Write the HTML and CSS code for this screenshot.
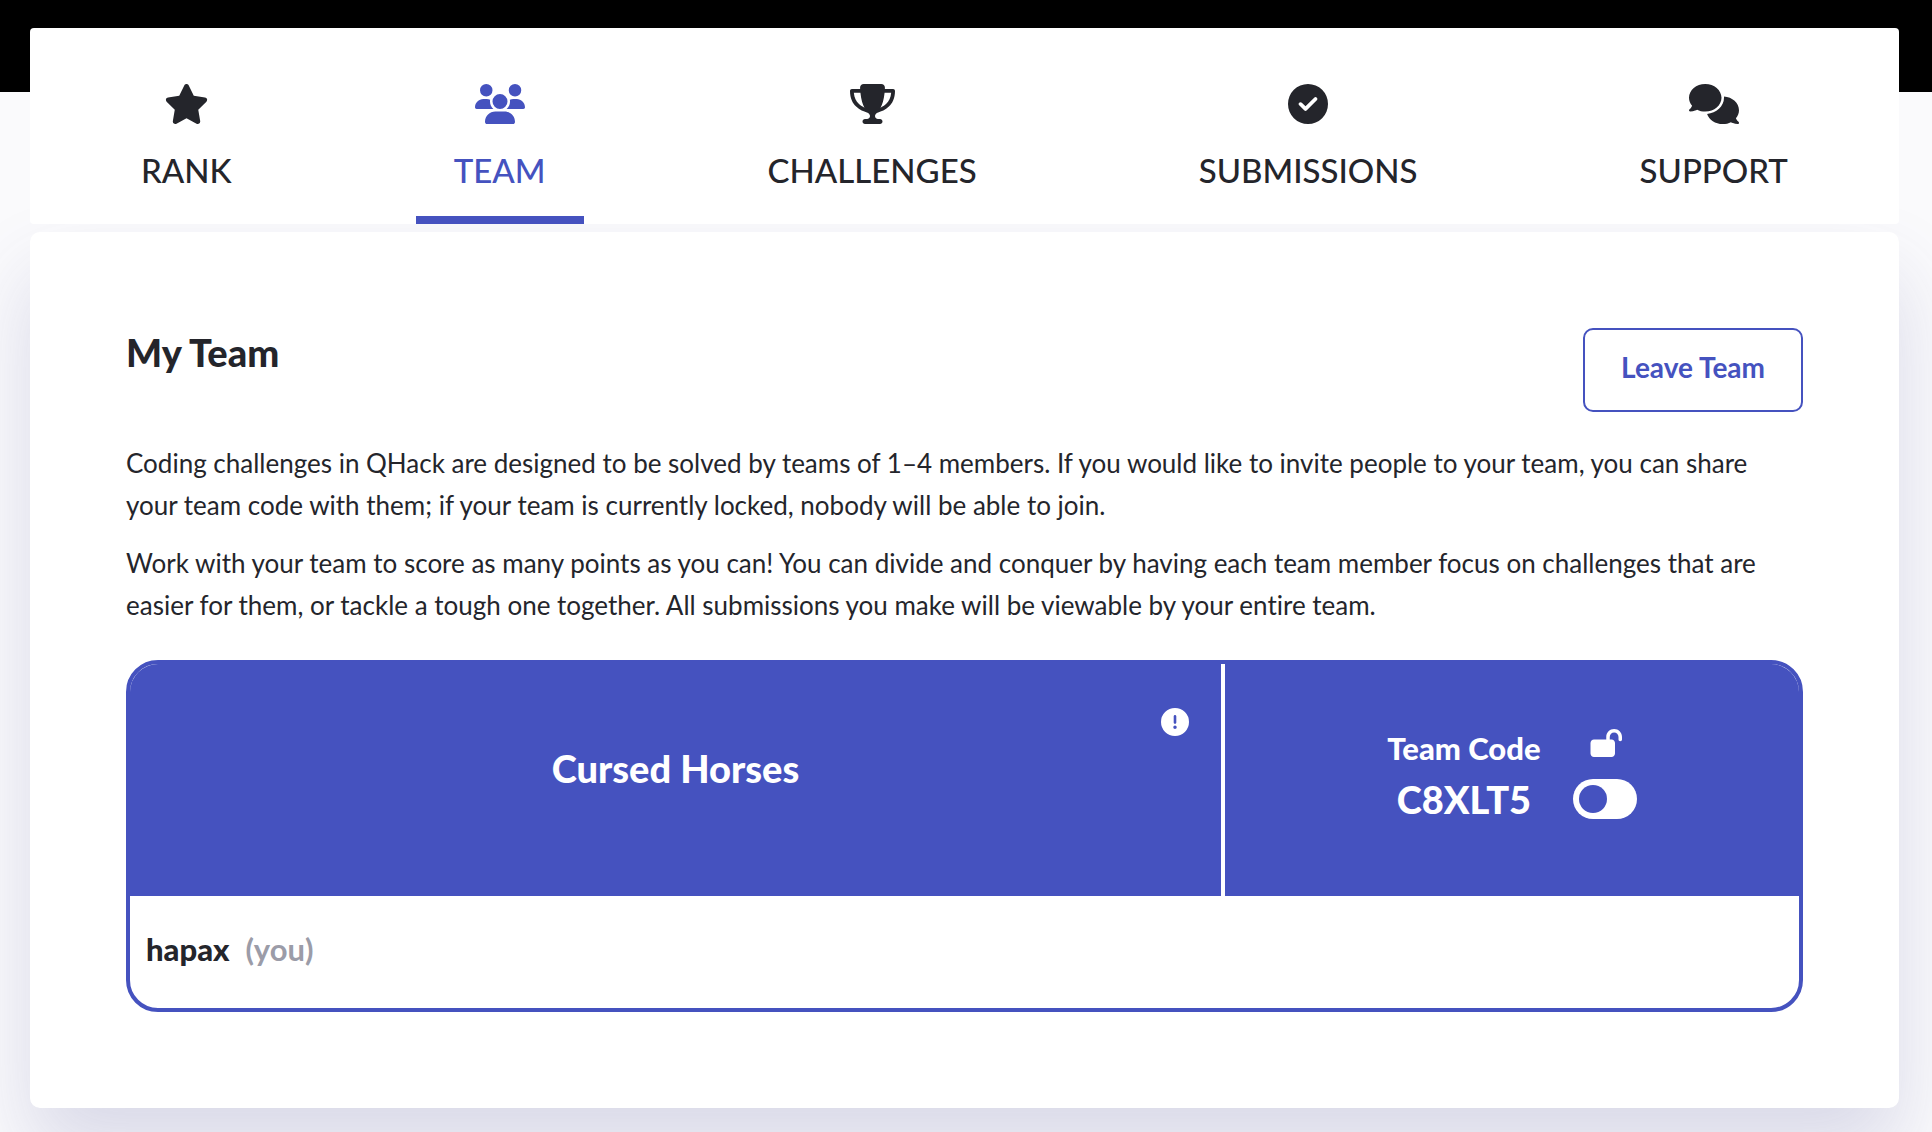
FILE: index.html
```
<!DOCTYPE html>
<html lang="en">
<head>
<meta charset="utf-8">
<meta name="viewport" content="width=device-width, initial-scale=1">
<title>QHack – My Team</title>
<link rel="stylesheet" href="styles.css">
</head>
<body>
<div class="page">
  <nav class="tabs" aria-label="Dashboard">
    <a class="tab" href="#rank">
      <svg class="tab-icon" viewBox="0 0 576 512" aria-hidden="true"><path d="M316.9 18C311.6 7 300.4 0 288.1 0s-23.4 7-28.8 18L195 150.3 51.4 171.5c-12 1.8-22 10.2-25.7 21.7s-.7 24.2 7.9 32.7L137.8 329 113.2 474.7c-2 12 3 24.2 12.9 31.3s23 8 33.8 2.3l128.3-68.5 128.3 68.5c10.8 5.7 23.9 4.9 33.8-2.3s14.9-19.3 12.9-31.3L438.5 329 542.7 225.9c8.6-8.5 11.7-21.2 7.9-32.7s-13.7-19.9-25.7-21.7L381.2 150.3 316.9 18z"/></svg>
      <span>RANK</span>
    </a>
    <a class="tab tab-active" href="#team" aria-current="page">
      <svg class="tab-icon" viewBox="0 0 640 512" aria-hidden="true"><path d="M144 0a80 80 0 1 1 0 160A80 80 0 1 1 144 0zM512 0a80 80 0 1 1 0 160A80 80 0 1 1 512 0zM0 298.7C0 239.8 47.8 192 106.7 192h42.7c15.9 0 31 3.5 44.6 9.7c-1.3 7.2-1.9 14.7-1.9 22.3c0 38.2 16.8 72.5 43.3 96c-.2 0-.4 0-.7 0H21.3C9.6 320 0 310.4 0 298.7zM405.3 320c-.2 0-.4 0-.7 0c26.6-23.5 43.3-57.8 43.3-96c0-7.6-.7-15-1.9-22.3c13.6-6.3 28.7-9.7 44.6-9.7h42.7C592.2 192 640 239.8 640 298.7c0 11.8-9.6 21.3-21.3 21.3H405.3zM224 224a96 96 0 1 1 192 0 96 96 0 1 1 -192 0zM128 485.3C128 411.7 187.7 352 261.3 352H378.7C452.3 352 512 411.7 512 485.3c0 14.7-11.9 26.7-26.7 26.7H154.7c-14.7 0-26.7-11.9-26.7-26.7z"/></svg>
      <span>TEAM</span>
    </a>
    <a class="tab" href="#challenges">
      <svg class="tab-icon" viewBox="0 0 576 512" aria-hidden="true"><path d="M400 0H176c-26.5 0-48.1 21.8-47.1 48.2c.2 5.3 .4 10.6 .7 15.8H24C10.7 64 0 74.7 0 88c0 92.6 33.5 157 78.5 200.7c44.3 43.1 98.3 64.8 138.1 75.8c23.4 6.5 39.4 26 39.4 45.6c0 20.9-17 37.9-37.9 37.9H192c-17.7 0-32 14.3-32 32s14.3 32 32 32H384c17.7 0 32-14.3 32-32s-14.3-32-32-32H357.9C337 448 320 431 320 410.1c0-19.6 15.9-39.2 39.4-45.6c39.9-11 93.9-32.7 138.2-75.8C542.5 245 576 180.6 576 88c0-13.3-10.7-24-24-24H446.4c.3-5.2 .5-10.4 .7-15.8C448.1 21.8 426.5 0 400 0zM48.9 112h84.4c9.1 90.1 29.2 150.3 51.9 190.6c-24.9-11-50.8-26.5-73.2-48.3c-32-31.1-58-76-63-142.3zM464.1 254.3c-22.4 21.8-48.3 37.3-73.2 48.3c22.7-40.3 42.8-100.5 51.9-190.6h84.4c-5.1 66.3-31.1 111.2-63 142.3z"/></svg>
      <span>CHALLENGES</span>
    </a>
    <a class="tab" href="#submissions">
      <svg class="tab-icon" viewBox="0 0 512 512" aria-hidden="true"><path d="M256 512A256 256 0 1 0 256 0a256 256 0 1 0 0 512zM369 209L241 337c-9.4 9.4-24.6 9.4-33.9 0l-64-64c-9.4-9.4-9.4-24.6 0-33.9s24.6-9.4 33.9 0l47 47L335 175c9.4-9.4 24.6-9.4 33.9 0s9.4 24.6 0 33.9z"/></svg>
      <span>SUBMISSIONS</span>
    </a>
    <a class="tab" href="#support">
      <svg class="tab-icon" viewBox="0 0 640 512" aria-hidden="true"><path d="M208 352c114.9 0 208-78.8 208-176S322.9 0 208 0S0 78.8 0 176c0 38.6 14.7 74.3 39.6 103.4c-3.5 9.4-8.7 17.7-14.2 24.7c-4.8 6.2-9.7 11-13.3 14.3c-1.8 1.6-3.3 2.9-4.3 3.7c-.5 .4-.9 .7-1.1 .8l-.2 .2C1 327.2-1.4 334.4 .8 340.9S9.1 352 16 352c21.8 0 43.8-5.6 62.1-12.5c9.2-3.5 17.8-7.4 25.2-11.4C134.1 343.3 169.8 352 208 352zM448 176c0 112.3-99.1 196.9-216.5 207C255.8 457.4 336.4 512 432 512c38.2 0 73.9-8.7 104.7-23.9c7.5 4 16 7.9 25.2 11.4c18.3 6.9 40.3 12.5 62.1 12.5c6.9 0 13.1-4.5 15.2-11.1c2.1-6.6-.2-13.8-5.8-17.9l-.2-.2c-.2-.2-.6-.4-1.1-.8c-1-.8-2.5-2-4.3-3.7c-3.6-3.3-8.5-8.1-13.3-14.3c-5.5-7-10.7-15.4-14.2-24.7c24.9-29 39.6-64.7 39.6-103.4c0-92.8-84.9-168.9-192.6-175.5c.4 5.1 .6 10.3 .6 15.5z"/></svg>
      <span>SUPPORT</span>
    </a>
  </nav>

  <main class="panel">
    <header class="panel-header">
      <h1 class="panel-title">My Team</h1>
      <button class="leave-button" type="button">Leave Team</button>
    </header>

    <div class="intro">
      <p>Coding challenges in QHack are designed to be solved by teams of 1–4 members. If you would like to invite people to your team, you can share your team code with them; if your team is currently locked, nobody will be able to join.</p>
      <p>Work with your team to score as many points as you can! You can divide and conquer by having each team member focus on challenges that are easier for them, or tackle a tough one together. All submissions you make will be viewable by your entire team.</p>
    </div>

    <table class="team">
      <thead>
        <tr>
          <th class="team-name" scope="col">
            Cursed Horses
            <svg class="notice" viewBox="0 0 512 512" role="img" aria-label="Team notice"><path d="M256 512A256 256 0 1 0 256 0a256 256 0 1 0 0 512zm0-384c13.3 0 24 10.7 24 24V264c0 13.3-10.7 24-24 24s-24-10.7-24-24V152c0-13.3 10.7-24 24-24zM224 352a32 32 0 1 1 64 0 32 32 0 1 1 -64 0z"/></svg>
          </th>
          <th class="team-access" scope="col">
            <div class="access">
              <div class="code">
                <span class="code-label">Team Code</span>
                <span class="code-value">C8XLT5</span>
              </div>
              <label class="lock">
                <svg class="lock-icon" viewBox="-64 0 640 512" role="img" aria-label="Lock team"><path d="M352 144c0-44.2 35.8-80 80-80s80 35.8 80 80v48c0 17.7 14.3 32 32 32s32-14.3 32-32V144C576 64.5 511.5 0 432 0S288 64.5 288 144v48H64c-35.3 0-64 28.7-64 64V448c0 35.3 28.7 64 64 64H384c35.3 0 64-28.7 64-64V256c0-35.3-28.7-64-64-64H352V144z"/></svg>
                <input class="toggle" type="checkbox" role="switch">
              </label>
            </div>
          </th>
        </tr>
      </thead>
      <tbody>
        <tr>
          <td class="member" colspan="2">hapax<span class="you">(you)</span></td>
        </tr>
      </tbody>
    </table>
  </main>
</div>
</body>
</html>
```
FILE: styles.css
```
:root {
  --ink: #24252b;
  --accent: #4552bf;
  --muted: #9b9ca8;
  --surface: #fff;
  --page: #fafafc;
}

* {
  box-sizing: border-box;
}

body {
  margin: 0;
  color: var(--ink);
  font-family: Lato, "Open Sans", sans-serif;
  font-size: 26px;
  font-variant-ligatures: none;
  line-height: 42px;
}

/* The black site banner shows behind the top of the tabs */
.page {
  min-height: 100vh;
  padding: 28px 33px 24px 30px;
  background: linear-gradient(#000 92px, var(--page) 92px);
  overflow: hidden;
}

.tabs {
  position: relative;
  z-index: 1;
  display: flex;
  justify-content: space-around;
  margin-bottom: 8px;
  padding-top: 56px;
  background: var(--surface);
  border-radius: 4px;
}

.tab {
  display: flex;
  flex-direction: column;
  align-items: center;
  gap: 26px;
  padding: 0 38px 26px;
  border-bottom: 8px solid transparent;
  color: var(--ink);
  font-size: 33px;
  font-weight: 500;
  line-height: 40px;
  text-decoration: none;
}

.tab-active {
  border-bottom-color: var(--accent);
  color: var(--accent);
}

.tab-icon {
  height: 40px;
  fill: currentColor;
}

.panel {
  padding: 96px;
  background: var(--surface);
  border-radius: 10px;
  box-shadow: 0 44px 80px rgba(70, 70, 142, 0.18);
}

.panel-header {
  display: flex;
  justify-content: space-between;
  align-items: flex-start;
  margin-bottom: 30px;
}

.panel-title {
  margin: 0;
  font-size: 38px;
  font-weight: 900;
  line-height: 48px;
}

.leave-button {
  padding: 20px 36px 26px;
  background: var(--surface);
  border: 2px solid var(--accent);
  border-radius: 10px;
  color: var(--accent);
  font: 700 28px/34px Lato, "Open Sans", sans-serif;
  cursor: pointer;
}

.intro p {
  margin: 0 0 16px;
}

.intro p:last-child {
  margin-bottom: 34px;
}

.team {
  width: 100%;
  table-layout: fixed;
  border: 4px solid var(--accent);
  border-collapse: separate;
  border-spacing: 0;
  border-radius: 32px;
}

.team th {
  height: 232px;
  background: var(--accent);
  color: #fff;
  font-size: 38px;
  font-weight: 900;
  line-height: 48px;
  text-align: center;
  vertical-align: middle;
}

.team .team-name {
  position: relative;
  width: 65.6%;
  padding: 0 0 24px;
  border-right: 4px solid #fff;
  border-top-left-radius: 28px;
}

.team .team-access {
  padding: 0 0 8px;
  border-top-right-radius: 28px;
}

.notice {
  position: absolute;
  top: 44px;
  right: 32px;
  width: 28px;
  height: 28px;
  fill: #fff;
}

.access {
  display: flex;
  justify-content: center;
  gap: 32px;
}

.code {
  display: flex;
  flex-direction: column;
  gap: 8px;
}

.code-label {
  font-size: 31px;
  line-height: 38px;
}

.lock {
  display: flex;
  flex-direction: column;
  align-items: center;
  gap: 22px;
}

.lock-icon {
  height: 28px;
  fill: #fff;
}

.toggle {
  appearance: none;
  width: 64px;
  height: 40px;
  margin: 0;
  padding: 6px;
  background: #fff;
  border-radius: 20px;
  cursor: pointer;
}

.toggle::before {
  content: "";
  display: block;
  width: 28px;
  height: 28px;
  background: var(--accent);
  border-radius: 50%;
}

.toggle:checked::before {
  margin-left: auto;
}

.member {
  padding: 34px 16px 40px;
  font-size: 31px;
  font-weight: 900;
  line-height: 38px;
}

.you {
  margin-left: 16px;
  color: var(--muted);
  font-weight: 700;
}
```
